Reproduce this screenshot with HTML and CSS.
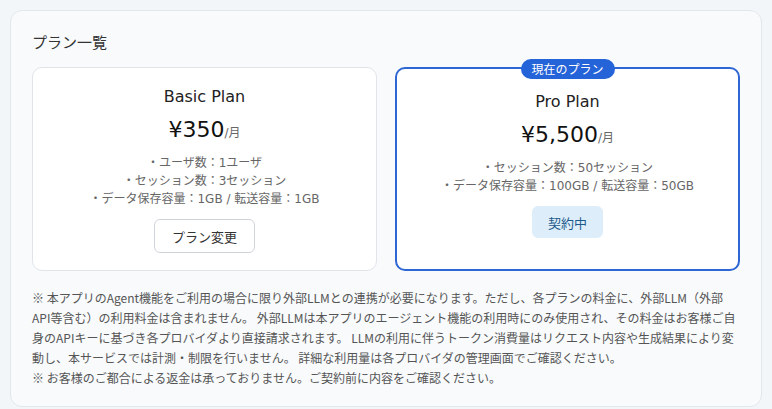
FILE: index.html
```html
<!DOCTYPE html>
<html lang="ja">
<head>
<meta charset="utf-8">
<title>プラン一覧</title>
<link rel="stylesheet" href="styles.css">
</head>
<body>
<section class="panel">
  <h2 class="panel-title">プラン一覧</h2>
  <div class="plans">
    <div class="plan">
      <div class="plan-name">Basic Plan</div>
      <div class="plan-price">¥350<span class="per">/月</span></div>
      <ul class="features">
        <li>・ユーザ数：1ユーザ</li>
        <li>・セッション数：3セッション</li>
        <li>・データ保存容量：1GB / 転送容量：1GB</li>
      </ul>
      <button class="btn btn-change">プラン変更</button>
    </div>
    <div class="plan plan-current">
      <span class="badge">現在のプラン</span>
      <div class="plan-name">Pro Plan</div>
      <div class="plan-price">¥5,500<span class="per">/月</span></div>
      <ul class="features">
        <li>・セッション数：50セッション</li>
        <li>・データ保存容量：100GB / 転送容量：50GB</li>
      </ul>
      <button class="btn btn-active">契約中</button>
    </div>
  </div>
  <div class="notes">
    <p>※ 本アプリのAgent機能をご利用の場合に限り外部LLMとの連携が必要になります。ただし、各プランの料金に、外部LLM（外部API等含む）の利用料金は含まれません。 外部LLMは本アプリのエージェント機能の利用時にのみ使用され、その料金はお客様ご自身のAPIキーに基づき各プロバイダより直接請求されます。 LLMの利用に伴うトークン消費量はリクエスト内容や生成結果により変<br>動し、本サービスでは計測・制限を行いません。 詳細な利用量は各プロバイダの管理画面でご確認ください。</p>
    <p>※ お客様のご都合による返金は承っておりません。ご契約前に内容をご確認ください。</p>
  </div>
</section>
</body>
</html>
```
FILE: styles.css
```css
html, body {
  margin: 0;
  padding: 0;
}
body {
  background: #f3f6f9;
  font-family: "DejaVu Sans", "Noto Sans CJK JP", sans-serif;
  color: #222;
  padding: 10px 10px 0 10px;
}
.panel {
  background: #f8fafc;
  border: 1px solid #e2e7ed;
  border-radius: 12px;
  padding: 20px 21px 18px 21px;
  box-sizing: border-box;
}
.panel-title {
  margin: 0 0 14px 0;
  font-size: 15px;
  font-weight: normal;
  line-height: 22px;
  color: #333;
  font-family: "Noto Sans CJK JP", sans-serif;
}
.plans {
  display: grid;
  grid-template-columns: 1fr 1fr;
  gap: 18px;
}
.plan {
  position: relative;
  background: #fff;
  border: 1px solid #e1e5ea;
  border-radius: 10px;
  padding: 18px 16px 16px;
  display: flex;
  flex-direction: column;
  align-items: center;
  height: 204px;
  box-sizing: border-box;
}
.plan-current {
  border: 2px solid #2e67d3;
  padding-top: 22px;
}
.badge {
  position: absolute;
  top: -10px;
  left: 50%;
  transform: translateX(-50%);
  background: #2563d8;
  color: #fff;
  font-size: 12px;
  line-height: 20px;
  padding: 0 11px;
  border-radius: 10px;
  font-family: "Noto Sans CJK JP", sans-serif;
  white-space: nowrap;
}
.plan-name {
  font-size: 16px;
  line-height: 22px;
  color: #222;
}
.plan-price {
  margin-top: 9px;
  font-size: 22px;
  line-height: 26px;
  color: #111;
}
.per {
  font-size: 12px;
  color: #666;
}
.features {
  list-style: none;
  margin: 8px 0 0 0;
  padding: 0;
  text-align: center;
  font-size: 12px;
  line-height: 18px;
  color: #666;
}
.btn {
  margin-top: 11px;
  font-family: "Noto Sans CJK JP", sans-serif;
  font-size: 13px;
  border-radius: 6px;
  cursor: pointer;
}
.btn-change {
  background: #fff;
  border: 1px solid #cfd4da;
  color: #333;
  height: 34px;
  padding: 0 17px;
}
.btn-active {
  background: #ddeefa;
  border: 1px solid #ddeefa;
  color: #1d5a8c;
  height: 32px;
  padding: 0 15px;
}
.notes {
  margin-top: 17px;
  font-family: "Noto Sans CJK JP", sans-serif;
  font-size: 12px;
  line-height: 20px;
  color: #555;
}
.notes p {
  margin: 0;
}
```
